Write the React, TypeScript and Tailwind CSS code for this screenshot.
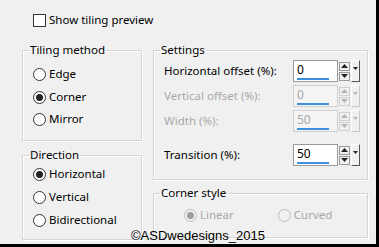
import React from 'react';

const FONT = "font-['Noto_Sans','Open_Sans',sans-serif]";

const Radio: React.FC<{ checked?: boolean; disabled?: boolean; label: string; className?: string }> = ({ checked, disabled, label, className = '' }) => (
  <div className={`flex items-center gap-[3px] h-[22px] ${className}`}>
    <span
      className={`w-[13px] h-[13px] rounded-full border flex items-center justify-center ${
        disabled ? 'border-[#bcbcbc] bg-[#f0f0f0]' : 'border-[#333] bg-white'
      }`}
    >
      {checked && <span className={`w-[7px] h-[7px] rounded-full ${disabled ? 'bg-[#9d9d9d]' : 'bg-[#222]'}`} />}
    </span>
    <span className={disabled ? 'text-[#a8a8a8]' : 'text-black'}>{label}</span>
  </div>
);

const Group: React.FC<{ title: string; className?: string; children: React.ReactNode }> = ({ title, className = '', children }) => (
  <fieldset className={`border border-[#d5d5d5] shadow-[inset_1px_1px_0_#fff,1px_1px_0_#fff] px-[10px] ${className}`}>
    <legend className="-ml-[4px] px-[1px] text-black leading-[14px]">{title}</legend>
    {children}
  </fieldset>
);

const Spinner: React.FC<{ value: string; disabled?: boolean }> = ({ value, disabled }) => {
  const arrow = disabled ? '#b5b5b5' : '#222';
  return (
    <div className="flex items-stretch h-[22px]">
      <div className={`w-[45px] border ${disabled ? 'border-[#d0d0d0] bg-[#f4f4f4]' : 'border-[#9a9a9a] bg-white'} flex flex-col justify-between pl-[3px] pr-[8px] pb-[1px]`}>
        <span className={`leading-[17px] text-[12px] ${disabled ? 'text-[#a8a8a8]' : 'text-black'}`}>{value}</span>
        <span className="h-[3px] bg-[#3d8fe0]" />
      </div>
      <div className="flex flex-col justify-center ml-[1px] gap-[1px]">
        <span className={`w-[11px] h-[9px] border ${disabled ? 'border-[#d0d0d0]' : 'border-[#9a9a9a]'} bg-[#f0f0f0] flex items-center justify-center`}>
          <svg width="7" height="4" viewBox="0 0 7 4"><path d="M0 4 L3.5 0 L7 4 Z" fill={arrow} /></svg>
        </span>
        <span className={`w-[11px] h-[9px] border ${disabled ? 'border-[#d0d0d0]' : 'border-[#9a9a9a]'} bg-[#f0f0f0] flex items-center justify-center`}>
          <svg width="7" height="4" viewBox="0 0 7 4"><path d="M0 0 L3.5 4 L7 0 Z" fill={arrow} /></svg>
        </span>
      </div>
      <div className={`w-[9px] ml-[1px] border-l border-t border-white border-r border-b ${disabled ? 'border-r-[#c8c8c8] border-b-[#c8c8c8]' : 'border-r-[#555] border-b-[#555]'} bg-[#f0f0f0] flex items-start justify-center pt-[6px]`}>
        <svg width="5" height="3" viewBox="0 0 5 3"><path d="M0 0 L2.5 3 L5 0 Z" fill={arrow} /></svg>
      </div>
    </div>
  );
};

const Row: React.FC<{ label: string; value: string; disabled?: boolean; className?: string }> = ({ label, value, disabled, className = '' }) => (
  <div className={`flex items-center justify-between ${className}`}>
    <span className={disabled ? 'text-[#a8a8a8]' : 'text-black'}>{label}</span>
    <Spinner value={value} disabled={disabled} />
  </div>
);

export default function App() {
  return (
    <div className={`w-[379px] h-[247px] bg-black ${FONT} text-[11.5px] leading-[16px]`}>
      <div className="relative w-[376px] h-[244px] bg-[#f0f0f0] pl-[22px] pt-[11px]">
        {/* Show tiling preview */}
        <div className="flex items-center gap-[3px] ml-[11px] h-[16px] mt-[1px]">
          <span className="w-[13px] h-[13px] border border-[#333] bg-white" />
          <span>Show tiling preview</span>
        </div>

        <div className="flex gap-[11px] mt-[15px]">
          {/* Left column */}
          <div className="flex flex-col w-[120px]">
            <Group title="Tiling method" className="h-[98px] pt-[6px]">
              <Radio label="Edge" />
              <Radio label="Corner" checked className="mt-[1px]" />
              <Radio label="Mirror" />
            </Group>
            <Group title="Direction" className="h-[92px] mt-[7px] pt-[1px]">
              <Radio label="Horizontal" checked />
              <Radio label="Vertical" className="mt-[1px]" />
              <Radio label="Bidirectional" className="mt-[1px]" />
            </Group>
          </div>

          {/* Right column */}
          <div className="flex flex-col w-[215px]">
            <Group title="Settings" className="h-[137px] pt-[3px] pr-[7px]">
              <Row label="Horizontal offset (%):" value="0" />
              <Row label="Vertical offset (%):" value="0" disabled className="mt-[3px]" />
              <Row label="Width (%):" value="50" disabled className="mt-[3px]" />
              <Row label="Transition (%):" value="50" className="mt-[12px]" />
            </Group>
            <Group title="Corner style" className="h-[52px] mt-[6px] pt-[4px]">
              <div className="flex pl-[20px] gap-[44px]">
                <Radio label="Linear" checked disabled />
                <Radio label="Curved" disabled />
              </div>
            </Group>
          </div>
        </div>

        {/* watermark */}
        <div className="absolute left-[131px] top-[228px] font-['Liberation_Sans',Arial,sans-serif] text-[13px] leading-[16px] text-black">
          ©ASDwedesigns_2015
        </div>
      </div>
    </div>
  );
}
